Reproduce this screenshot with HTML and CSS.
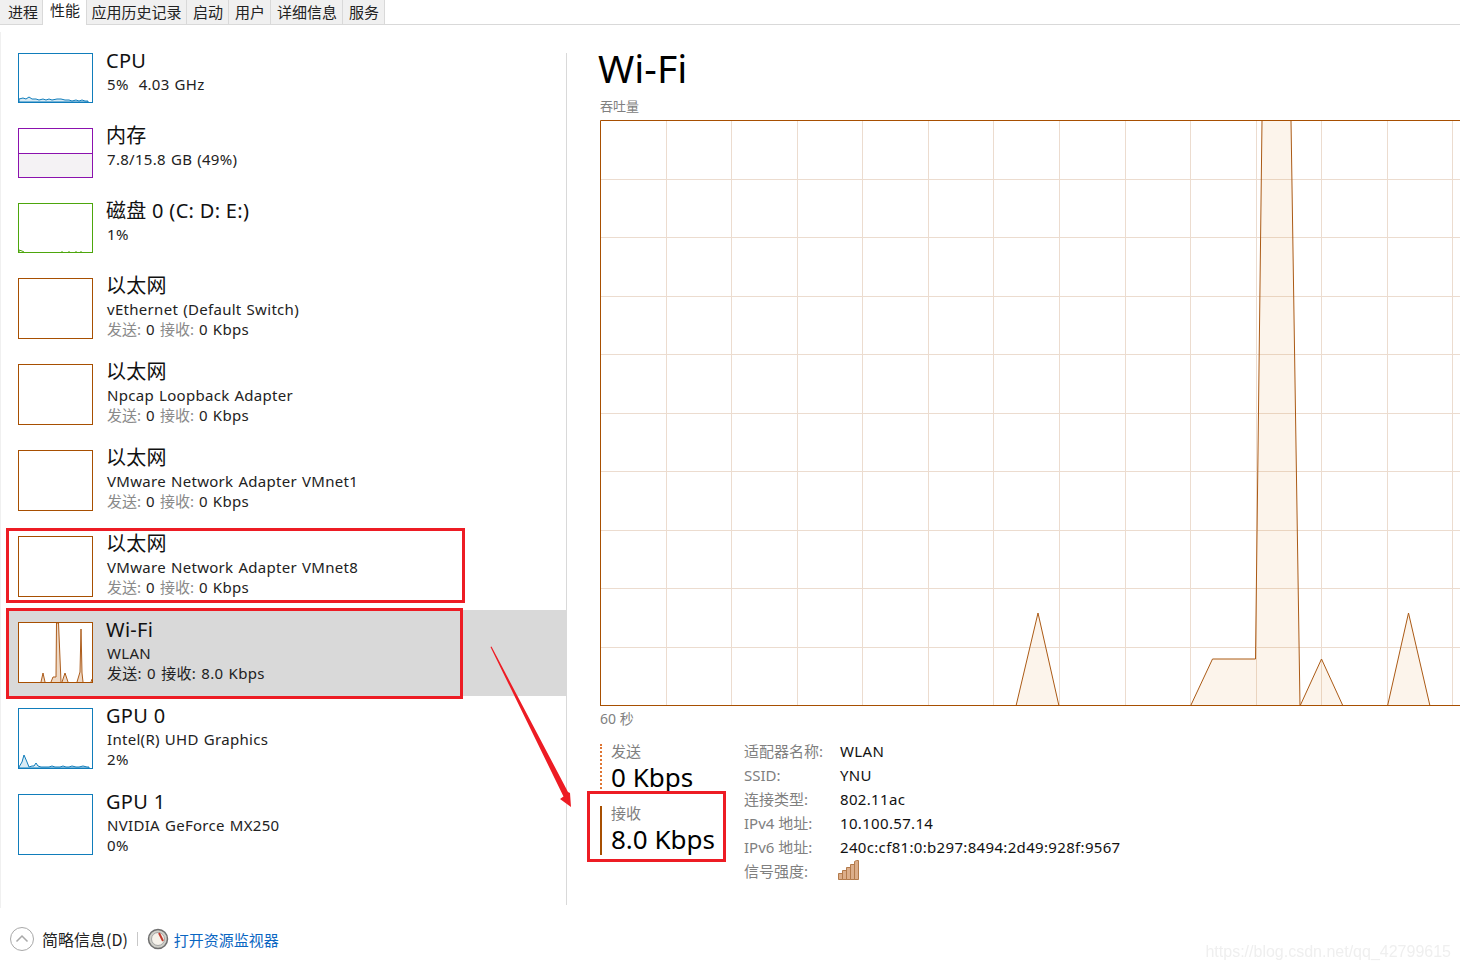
FILE: index.html
```html
<!DOCTYPE html>
<html lang="zh-CN">
<head>
<meta charset="utf-8">
<title>任务管理器</title>
<link rel="stylesheet" href="styles.css">
</head>
<body>
<nav class="tabs">
  <span class="tab tab-first">进程</span>
  <span class="tab tab-active">性能</span>
  <span class="tab tab-wide">应用历史记录</span>
  <span class="tab">启动</span>
  <span class="tab">用户</span>
  <span class="tab">详细信息</span>
  <span class="tab">服务</span>
</nav>

<div class="content">
  <aside class="sidebar">
    <div class="row row-short">
      <svg class="thumb thumb-short cpu" viewBox="0 0 75 50"><rect class="frame" x=".5" y=".5" width="74" height="49"/><path class="spark" d="M1 46l4-1 3 1 3-2 3 2 4 0 3 1 4-1 3 1 3-1 3 1 5-1 4 0 4 1 4 0 3 1 4-1 3 1 3-1 3 1 3 0V49H1z"/></svg>
      <div class="text"><div class="name">CPU</div><div class="sub">5%&nbsp; 4.03 GHz</div></div>
    </div>
    <div class="row row-short">
      <svg class="thumb thumb-short mem" viewBox="0 0 75 50"><rect class="mem-fill" x="1" y="25" width="73" height="24"/><path class="frame" d="M.5 25.500H74.500"/><rect class="frame" x=".5" y=".5" width="74" height="49"/></svg>
      <div class="text"><div class="name">内存</div><div class="sub">7.8/15.8 GB (49%)</div></div>
    </div>
    <div class="row row-short">
      <svg class="thumb thumb-short disk" viewBox="0 0 75 50"><rect class="frame" x=".5" y=".5" width="74" height="49"/><path class="spark" d="M1 49V47l3 1 2 1M44 49v-1M51 49v-1M58 49v-1M63 49v-1"/></svg>
      <div class="text"><div class="name">磁盘 0 (C: D: E:)</div><div class="sub">1%</div></div>
    </div>
    <div class="row">
      <svg class="thumb net" viewBox="0 0 75 61"><rect class="frame" x=".5" y=".5" width="74" height="60"/></svg>
      <div class="text"><div class="name">以太网</div><div class="sub">vEthernet (Default Switch)</div><div class="sub"><span class="dim">发送:</span> 0 <span class="dim">接收:</span> 0 Kbps</div></div>
    </div>
    <div class="row">
      <svg class="thumb net" viewBox="0 0 75 61"><rect class="frame" x=".5" y=".5" width="74" height="60"/></svg>
      <div class="text"><div class="name">以太网</div><div class="sub">Npcap Loopback Adapter</div><div class="sub"><span class="dim">发送:</span> 0 <span class="dim">接收:</span> 0 Kbps</div></div>
    </div>
    <div class="row">
      <svg class="thumb net" viewBox="0 0 75 61"><rect class="frame" x=".5" y=".5" width="74" height="60"/></svg>
      <div class="text"><div class="name">以太网</div><div class="sub">VMware Network Adapter VMnet1</div><div class="sub"><span class="dim">发送:</span> 0 <span class="dim">接收:</span> 0 Kbps</div></div>
    </div>
    <div class="row">
      <svg class="thumb net" viewBox="0 0 75 61"><rect class="frame" x=".5" y=".5" width="74" height="60"/></svg>
      <div class="text"><div class="name">以太网</div><div class="sub">VMware Network Adapter VMnet8</div><div class="sub"><span class="dim">发送:</span> 0 <span class="dim">接收:</span> 0 Kbps</div></div>
    </div>
    <div class="row row-selected">
      <svg class="thumb net" viewBox="0 0 75 61"><rect class="thumb-bg" x=".5" y=".5" width="74" height="60"/><path class="spark" d="M23 60l2-9 2 9M33 60l2-5 3 0 .5-54 2 0 2.500 59M44 60l3-9 3 9M59 60l3-10 1-43 1 44 1 9M73 60l1-3"/><rect class="frame" x=".5" y=".5" width="74" height="60"/></svg>
      <div class="text"><div class="name">Wi-Fi</div><div class="sub">WLAN</div><div class="sub sub-on">发送: 0 接收: 8.0 Kbps</div></div>
    </div>
    <div class="row">
      <svg class="thumb gpu" viewBox="0 0 75 61"><rect class="frame" x=".5" y=".5" width="74" height="60"/><path class="spark" d="M1 59l3-5 2-7 3 7 2 5 3-1 2 0 2-3 2 3 3 1 5 0 3 0 3-1 3 1 5 0 3-1 3 1 3 0 3-1 4 1 3 0 4-1 4 1 2 0V60H1z"/></svg>
      <div class="text"><div class="name">GPU 0</div><div class="sub">Intel(R) UHD Graphics</div><div class="sub">2%</div></div>
    </div>
    <div class="row">
      <svg class="thumb gpu" viewBox="0 0 75 61"><rect class="frame" x=".5" y=".5" width="74" height="60"/></svg>
      <div class="text"><div class="name">GPU 1</div><div class="sub">NVIDIA GeForce MX250</div><div class="sub">0%</div></div>
    </div>
  </aside>

  <main class="detail">
    <h1 class="title">Wi-Fi</h1>
    <div class="chart-label">吞吐量</div>
    <svg class="chart" width="860" height="587" viewBox="0 0 860 587">
      <path class="grid" d="M66.500 0V586M131.500 0V586M197.500 0V586M262.500 0V586M328.500 0V586M393.500 0V586M459.500 0V586M525.500 0V586M590.500 0V586M656.500 0V586M721.500 0V586M787.500 0V586M852.500 0V586M0 59.500H860M0 117.500H860M0 176.500H860M0 234.500H860M0 293.500H860M0 351.500H860M0 410.500H860M0 468.500H860M0 527.500H860"/>
      <path class="area" d="M416 586L438 493L459 586ZM590.500 586L612.500 539H655.500L662 .5H691L700 586L721.500 539L743 586ZM787.500 586L808.500 493L830 586Z"/>
      <path class="plot" d="M416 586L438 493L459 586M590.500 586L612.500 539H655.500L662 .5M691 .5L700 586L721.500 539L743 586M787.500 586L808.500 493L830 586"/>
      <path class="axis" d="M.5 586V.5H860M0 585.500H860"/>
    </svg>
    <div class="time">60 秒</div>
    <div class="stats">
      <div class="legend">
        <div class="meter meter-send"><div class="meter-label">发送</div><div class="meter-value">0 Kbps</div></div>
        <div class="meter meter-recv"><div class="meter-label">接收</div><div class="meter-value">8.0 Kbps</div></div>
      </div>
      <div class="info">
        <span class="key">适配器名称:</span><span class="val">WLAN</span>
        <span class="key">SSID:</span><span class="val">YNU</span>
        <span class="key">连接类型:</span><span class="val">802.11ac</span>
        <span class="key">IPv4 地址:</span><span class="val">10.100.57.14</span>
        <span class="key">IPv6 地址:</span><span class="val">240c:cf81:0:b297:8494:2d49:928f:9567</span>
        <span class="key">信号强度:</span>
        <span class="val"><svg class="signal" width="22" height="20" viewBox="0 0 22 20"><path class="signal-bar" d="M.5 19.500V13.500H4.500V19.500ZM4.500 19.500V10.500H8.500V19.500ZM8.500 19.500V7.500H12.500V19.500ZM12.500 19.500V4.500H16.500V19.500ZM16.500 19.500V1.500L18.500 .5H20.500V19.500Z"/></svg></span>
      </div>
    </div>
  </main>
</div>

<footer class="footer">
  <svg class="chev" width="26" height="26" viewBox="0 0 26 26"><circle cx="13" cy="13" r="11.500"/><path d="M7.500 15.500L13 10l5.500 5.500"/></svg>
  <span class="less">简略信息(D)</span>
  <span class="sep"></span>
  <svg class="gauge" width="22" height="22" viewBox="0 0 22 22"><circle class="g-outer" cx="11" cy="11" r="9.500"/><circle class="g-inner" cx="11" cy="11" r="6.500"/><path class="g-needle" d="M12 5l4 8"/></svg>
  <span class="link">打开资源监视器</span>
  <span class="watermark">https://blog.csdn.net/qq_42799615</span>
</footer>

<div class="mark mark-eth"></div>
<div class="mark mark-wifi"></div>
<div class="mark mark-recv"></div>
<svg class="arrow" width="100" height="180" viewBox="0 0 100 180"><path class="arrow-head" d="M10.500 7L11.500 6.500L88 152L90 153L91 167L80 159L83.500 156.500Z"/></svg>
</body>
</html>
```
FILE: styles.css
```css
* { box-sizing: border-box; }
html, body { margin: 0; height: 100%; }
body {
  width: 1460px;
  height: 969px;
  overflow: hidden;
  background: #fff;
  color: #111;
  font-family: "Noto Sans", "Noto Sans CJK SC", sans-serif;
  display: flex;
  flex-direction: column;
  position: relative;
}
.tabs {
  display: flex;
  height: 25px;
  border-bottom: 1px solid #d9d9d9;
  font-size: 15px;
  line-height: 24px;
  font-family: "Noto Sans CJK SC", sans-serif;
  color: #222;
  flex: none;
}
.tab {
  padding: 0 5px 0 6px;
  background: #f0f0f0;
  border-right: 1px solid #d9d9d9;
  height: 24px;
  white-space: nowrap;
}
.tab-first { padding-left: 8px; padding-right: 4px; }
.tab-wide { padding: 0 4.500px; }
.tab-active {
  background: #fff;
  height: 25px;
  padding: 0 6px 0 7px;
  line-height: 20px;
  border-left: 1px solid #d9d9d9;
  margin-left: -1px;
}
.content { display: flex; height: 876px; margin-top: 7px; flex: none; }
.sidebar {
  width: 566px;
  padding: 9px 0 0 5px;
  border-left: 1px solid #f0f0f0;
  flex: none;
}
.row { height: 86px; padding: 12px 0 0 12px; display: flex; }
.row-short { height: 75px; }
.row-selected { background: #d9d9d9; }
.thumb { width: 75px; height: 61px; flex: none; display: block; }
.thumb-short { height: 50px; }
.frame { fill: none; stroke-width: 1; }
.cpu .frame, .cpu .spark, .gpu .frame, .gpu .spark { stroke: #117dbb; }
.cpu .spark, .gpu .spark { fill: #d9ebf5; stroke-width: 1; }
.mem .frame { stroke: #8b12ae; }
.mem-fill { fill: #f4f2f4; }
.disk .frame, .disk .spark { stroke: #4da60c; fill: none; }
.net .frame { stroke: #a74f01; }
.net .spark { fill: #eed9c6; stroke: #ad5d1c; stroke-width: 1; }
.thumb-bg { fill: #fff; }
.text { margin: -5px 0 0 14px; white-space: nowrap; }
.name { font-size: 20px; line-height: 26px; color: #111; letter-spacing: .3px; margin-left: -1px; }
.sub { font-size: 15px; line-height: 20px; color: #222; letter-spacing: .3px; word-spacing: .8px; }
.dim { color: #8a8a8a; letter-spacing: 0; }
.sub-on { word-spacing: 1px; }
.detail {
  height: 852px;
  margin-top: 21px;
  border-left: 1px solid #d9d9d9;
  padding-left: 31px;
  flex: 1;
  min-width: 0;
}
.title {
  margin: 0 0 16px;
  font-size: 39px;
  font-weight: 400;
  line-height: 30px;
  color: #000;
  white-space: nowrap;
}
.chart-label {
  margin: 0 0 7px 2px;
  font-size: 13px;
  line-height: 14px;
  color: #808080;
}
.chart { display: block; margin-left: 2px; }
.grid { fill: none; stroke: #ecdccf; stroke-width: 1; }
.area { fill: #e0801c; fill-opacity: .09; }
.plot { fill: none; stroke: #ab5a15; stroke-width: 1; }
.axis { fill: none; stroke: #a74f01; stroke-width: 1; }
.time {
  margin: 3px 0 0 2px;
  font-size: 14px;
  line-height: 18px;
  color: #808080;
}
.stats { display: flex; margin: 11px 0 0 2px; }
.legend { width: 144px; flex: none; padding-top: 5px; }
.meter { height: 49px; padding-left: 9px; border-left: 2px solid #a74f01; }
.meter-send { height: 45px; border-left: 2px dotted #de7533; margin-bottom: 17px; }
.meter-label { font-size: 15px; line-height: 15px; margin-bottom: 3px; color: #808080; }
.meter-value { font-size: 26px; line-height: 31px; color: #000; white-space: nowrap; }
.info {
  display: grid;
  grid-template-columns: 96px auto;
  grid-auto-rows: 24px;
  font-size: 15px;
  line-height: 24px;
  align-items: center;
}
.key { color: #808080; white-space: nowrap; }
.val { color: #111; white-space: nowrap; letter-spacing: .33px; }
.signal { display: block; margin: -2px 0 0 -2px; }
.signal-bar { fill: #dcae8a; stroke: #b37a4b; stroke-width: 1; }
.footer {
  display: flex;
  align-items: center;
  height: 61px;
  padding: 1px 0 0 9px;
  font-size: 15px;
  flex: 1;
  font-family: "Noto Sans CJK SC", sans-serif;
}
.chev { flex: none; }
.chev circle { fill: none; stroke: #a8a8a8; stroke-width: 1; }
.chev path { fill: none; stroke: #a8a8a8; stroke-width: 1.500; }
.less { margin-left: 7px; font-size: 16px; color: #222; white-space: nowrap; }
.sep { width: 1px; height: 14px; background: #c8c8c8; margin-left: 9px; }
.gauge { margin-left: 9px; flex: none; }
.g-outer { fill: #cfcfc8; stroke: #6f6f6f; stroke-width: 1.500; }
.g-inner { fill: #f6f2ea; stroke: #a5a5a5; stroke-width: 1; }
.g-needle { stroke: #c0392b; stroke-width: 2; fill: none; }
.link { margin-left: 5px; color: #0a66c2; white-space: nowrap; }
.watermark {
  margin-left: auto;
  margin-right: 9px;
  margin-top: 25px;
  font-family: "Liberation Sans", sans-serif;
  font-size: 16px;
  color: #efefef;
  filter: blur(.5px);
  white-space: nowrap;
}
.mark { position: absolute; border: 3px solid #ed1c24; pointer-events: none; }
.mark-eth { left: 6px; top: 528px; width: 459px; height: 75px; }
.mark-wifi { left: 6px; top: 608px; width: 457px; height: 91px; }
.mark-recv { left: 587px; top: 791px; width: 139px; height: 71px; }
.arrow { position: absolute; left: 480px; top: 640px; }
.arrow-head { fill: #ed1c24; }
```
